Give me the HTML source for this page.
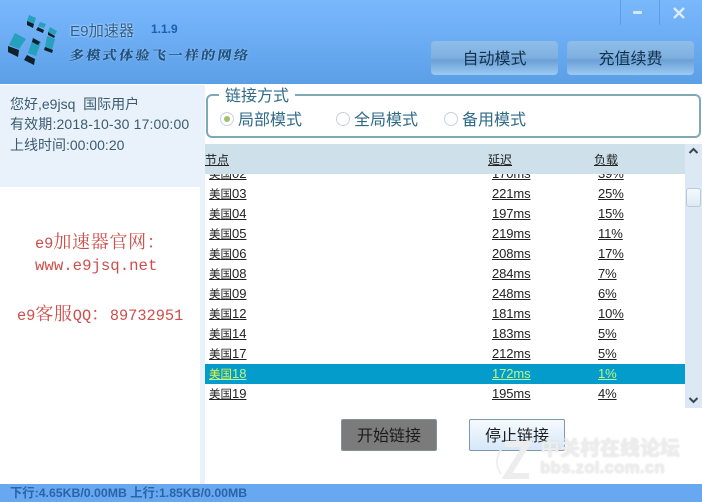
<!DOCTYPE html>
<html lang="zh"><head><meta charset="utf-8"><title>E9加速器</title>
<style>
html,body{margin:0;padding:0;width:702px;height:502px;overflow:hidden;background:#fff}
body{position:relative;font-family:"Liberation Sans","Noto Sans CJK SC",sans-serif;color:#222}
div,span.a{position:absolute;white-space:nowrap}
#hd{left:0;top:0;width:702px;height:84px;background:linear-gradient(180deg,#79b8fb 0,#6eaef5 40%,#5b9fe6 100%)}
#lt{left:0;top:85px;width:205px;height:102px;background:#e9f2fa}
#strip{left:200px;top:187px;width:5px;height:297px;background:#e9f2fa}
#ft{left:0;top:484px;width:702px;height:18px;background:#68a8f1;color:#2a64a6;font-weight:bold;font-size:12.3px;line-height:19px}
.info{left:10px;font-size:14px;line-height:18px;color:#3c5a70}
.btn{top:41px;width:127px;height:34px;border-radius:4px;text-align:center;font-size:16px;line-height:37px;color:#12304c;background:linear-gradient(180deg,#8fbde9 0,#7eafdf 50%,#6ba0d6 56%,#9ccaf3 100%)}
#fs{left:206px;top:94px;width:491px;height:40px;border:2px solid #7fa9b9;border-radius:6px;background:#fff}
#lg{left:219px;top:87px;padding:0 6px;background:#fff;font-size:16px;line-height:20px;color:#2f6a88}
.rd{top:112px;width:12px;height:12px;border:1px solid #c5d3dc;border-radius:50%;background:#fff}
.rl{top:111px;font-size:16px;line-height:20px;color:#2f6a88}
#th{left:205px;top:144px;width:480px;height:30px;background:#cee0e9}
.h{top:152px;font-size:12px;line-height:16px;text-decoration:underline;color:#222}
#list{left:205px;top:174px;width:480px;height:232px;overflow:hidden}
.r{left:0;width:480px;height:20px;font-size:13px;line-height:20px;color:#222}
.r span{position:absolute;text-decoration:underline}
.r span:nth-child(1){left:4px}.r span:nth-child(2){left:287px;letter-spacing:-.1px}.r span:nth-child(3){left:393px;letter-spacing:-.1px}
.r i{font-style:normal;font-size:11.5px}
.sel{background:#049ccb;color:#b9f58c}
#sb{left:685px;top:144px;width:17px;height:264px;background:#dce8f3}
#th2{left:686px;top:188px;width:15px;height:19px;border:1px solid #b9cad8;border-radius:3px;box-sizing:border-box;background:linear-gradient(180deg,#f4f9fd,#dfeaf4)}
.bb{top:419px;width:96px;height:32px;border-radius:2px;box-sizing:border-box;text-align:center;font-size:16px;line-height:34px;color:#1c1c1c}
.red{color:#cf4e4a;font-size:15.3px;line-height:20px;font-family:"Liberation Mono",monospace}
.red b{font-weight:normal;font-size:18px;letter-spacing:.7px;font-family:"Noto Serif CJK SC",serif}
.wm{color:#ededed;font-weight:bold;text-shadow:0 0 2px #dcdcdc}
</style></head><body>
<div id="hd"></div>
<svg style="position:absolute;left:0;top:0" width="90" height="84">
<g fill="#26a0bd"><polygon points="29,15 36,18 34,24 27,21"/><polygon points="40,22 46,24 44,28 38,26"/><polygon points="50,27 57,31 55,35 48,32"/><polygon points="33,38 41,42 36,56 28,53"/><polygon points="47,36 55,39 52,50 45,47"/><polygon points="15,33 26,39 19,49 9,45"/></g>
<g fill="#0f2029"><polygon points="27,21 34,24 33,28 27,25"/><polygon points="38,27 44,30 43,33 36,30"/><polygon points="48,32 55,36 54,38 48,35"/><polygon points="33,38 40,42 38,45 32,42"/><polygon points="45,47 53,50 52,53 44,50"/><polygon points="8,46 19,50 18,57 8,52"/><polygon points="27,55 35,59 34,65 24,60"/></g>
</svg>
<div style="left:70px;top:22px;font-size:15.200px;line-height:20px;color:#2b5e8e;text-shadow:0 0 2px #e8f4ff">E9加速器</div>
<div style="left:151px;top:22px;font-size:12px;line-height:14px;font-weight:bold;color:#1b5fb0">1.1.9</div>
<div style="left:70px;top:46px;font-size:14px;letter-spacing:2.4px;line-height:18px;font-weight:bold;color:#1f5282;font-family:'Noto Serif CJK SC',serif;text-shadow:0 0 2px #cfe5fb;-webkit-text-stroke:.3px #1f5282;transform:skewX(-8deg) scaleY(.9);transform-origin:0 50%">多模式体验飞一样的网络</div>
<div style="left:620px;top:0;width:1px;height:25px;background:#5f9fdf"></div>
<div style="left:659px;top:0;width:1px;height:25px;background:#5f9fdf"></div>
<div style="left:633px;top:11px;width:9px;height:3px;background:#d5e6f6;border-radius:1px"></div>
<svg style="position:absolute;left:672px;top:7px" width="14" height="12"><path d="M2 1L12 11M12 1L2 11" stroke="#dcebf8" stroke-width="2.4" fill="none"/></svg>
<div class="btn" style="left:431px">自动模式</div>
<div class="btn" style="left:567px">充值续费</div>

<div id="lt"></div><div id="strip"></div>
<div class="info" style="top:95px">您好,e9jsq&nbsp; 国际用户</div>
<div class="info" style="top:115px;letter-spacing:.15px">有效期:2018-10-30 17:00:00</div>
<div class="info" style="top:136px">上线时间:00:00:20</div>

<div class="red" style="left:35px;top:231px">e9<b>加速器官网：</b></div>
<div class="red" style="left:35px;top:256px;font-size:15.7px">www.e9jsq.net</div>
<div class="red" style="left:17px;top:303px">e9<b>客服</b>QQ<b>：</b>89732951</div>

<div id="fs"></div><div id="lg">链接方式</div>
<div class="rd" style="left:220px"></div><div style="left:224px;top:116px;width:6px;height:6px;border-radius:50%;background:#a3bf6a"></div>
<div class="rl" style="left:238px">局部模式</div>
<div class="rd" style="left:336px"></div><div class="rl" style="left:354px">全局模式</div>
<div class="rd" style="left:444px"></div><div class="rl" style="left:462px">备用模式</div>

<div id="th"></div>
<div class="h" style="left:205px">节点</div><div class="h" style="left:488px">延迟</div><div class="h" style="left:594px">负载</div>
<div id="list">
<div class="r" style="top:-10px"><span><i>美国</i>02</span><span>170ms</span><span>39%</span></div>
<div class="r" style="top:10px"><span><i>美国</i>03</span><span>221ms</span><span>25%</span></div>
<div class="r" style="top:30px"><span><i>美国</i>04</span><span>197ms</span><span>15%</span></div>
<div class="r" style="top:50px"><span><i>美国</i>05</span><span>219ms</span><span>11%</span></div>
<div class="r" style="top:70px"><span><i>美国</i>06</span><span>208ms</span><span>17%</span></div>
<div class="r" style="top:90px"><span><i>美国</i>08</span><span>284ms</span><span>7%</span></div>
<div class="r" style="top:110px"><span><i>美国</i>09</span><span>248ms</span><span>6%</span></div>
<div class="r" style="top:130px"><span><i>美国</i>12</span><span>181ms</span><span>10%</span></div>
<div class="r" style="top:150px"><span><i>美国</i>14</span><span>183ms</span><span>5%</span></div>
<div class="r" style="top:170px"><span><i>美国</i>17</span><span>212ms</span><span>5%</span></div>
<div class="r sel" style="top:190px"><span><i style="color:#e4f53a">美国</i>18</span><span>172ms</span><span>1%</span></div>
<div class="r" style="top:210px"><span><i>美国</i>19</span><span>195ms</span><span>4%</span></div>
</div>
<div id="sb"></div><div id="th2"></div>
<svg style="position:absolute;left:688px;top:147px" width="11" height="8"><path d="M1.500 6L5.500 2L9.500 6" stroke="#3c4650" stroke-width="2" fill="none"/></svg>
<svg style="position:absolute;left:688px;top:396px" width="11" height="8"><path d="M1.500 2L5.500 6L9.500 2" stroke="#3c4650" stroke-width="2" fill="none"/></svg>

<div class="bb" style="left:341px;background:#7b7b7b;border:1px solid #84929c">开始链接</div>
<div class="bb" style="left:469px;background:linear-gradient(180deg,#f6fafe,#d5e7f8);border:1px solid #7c99ad">停止链接</div>

<svg style="position:absolute;left:495px;top:440px" width="45" height="44"><path d="M10 4H32L12 36H34" stroke="#ededed" stroke-width="6" fill="none"/><path d="M6 10A20 20 0 0 0 6 34" stroke="#efefef" stroke-width="2" fill="none"/></svg>
<div class="wm" style="left:540px;top:438px;font-size:20px;line-height:22px">中关村在线论坛</div>
<div class="wm" style="left:540px;top:458px;font-size:17px;line-height:20px;letter-spacing:.15px">bbs.zol.com.cn</div>

<div id="ft"><span class="a" style="left:10px">下行:4.65KB/0.00MB 上行:1.85KB/0.00MB</span></div>
</body></html>
